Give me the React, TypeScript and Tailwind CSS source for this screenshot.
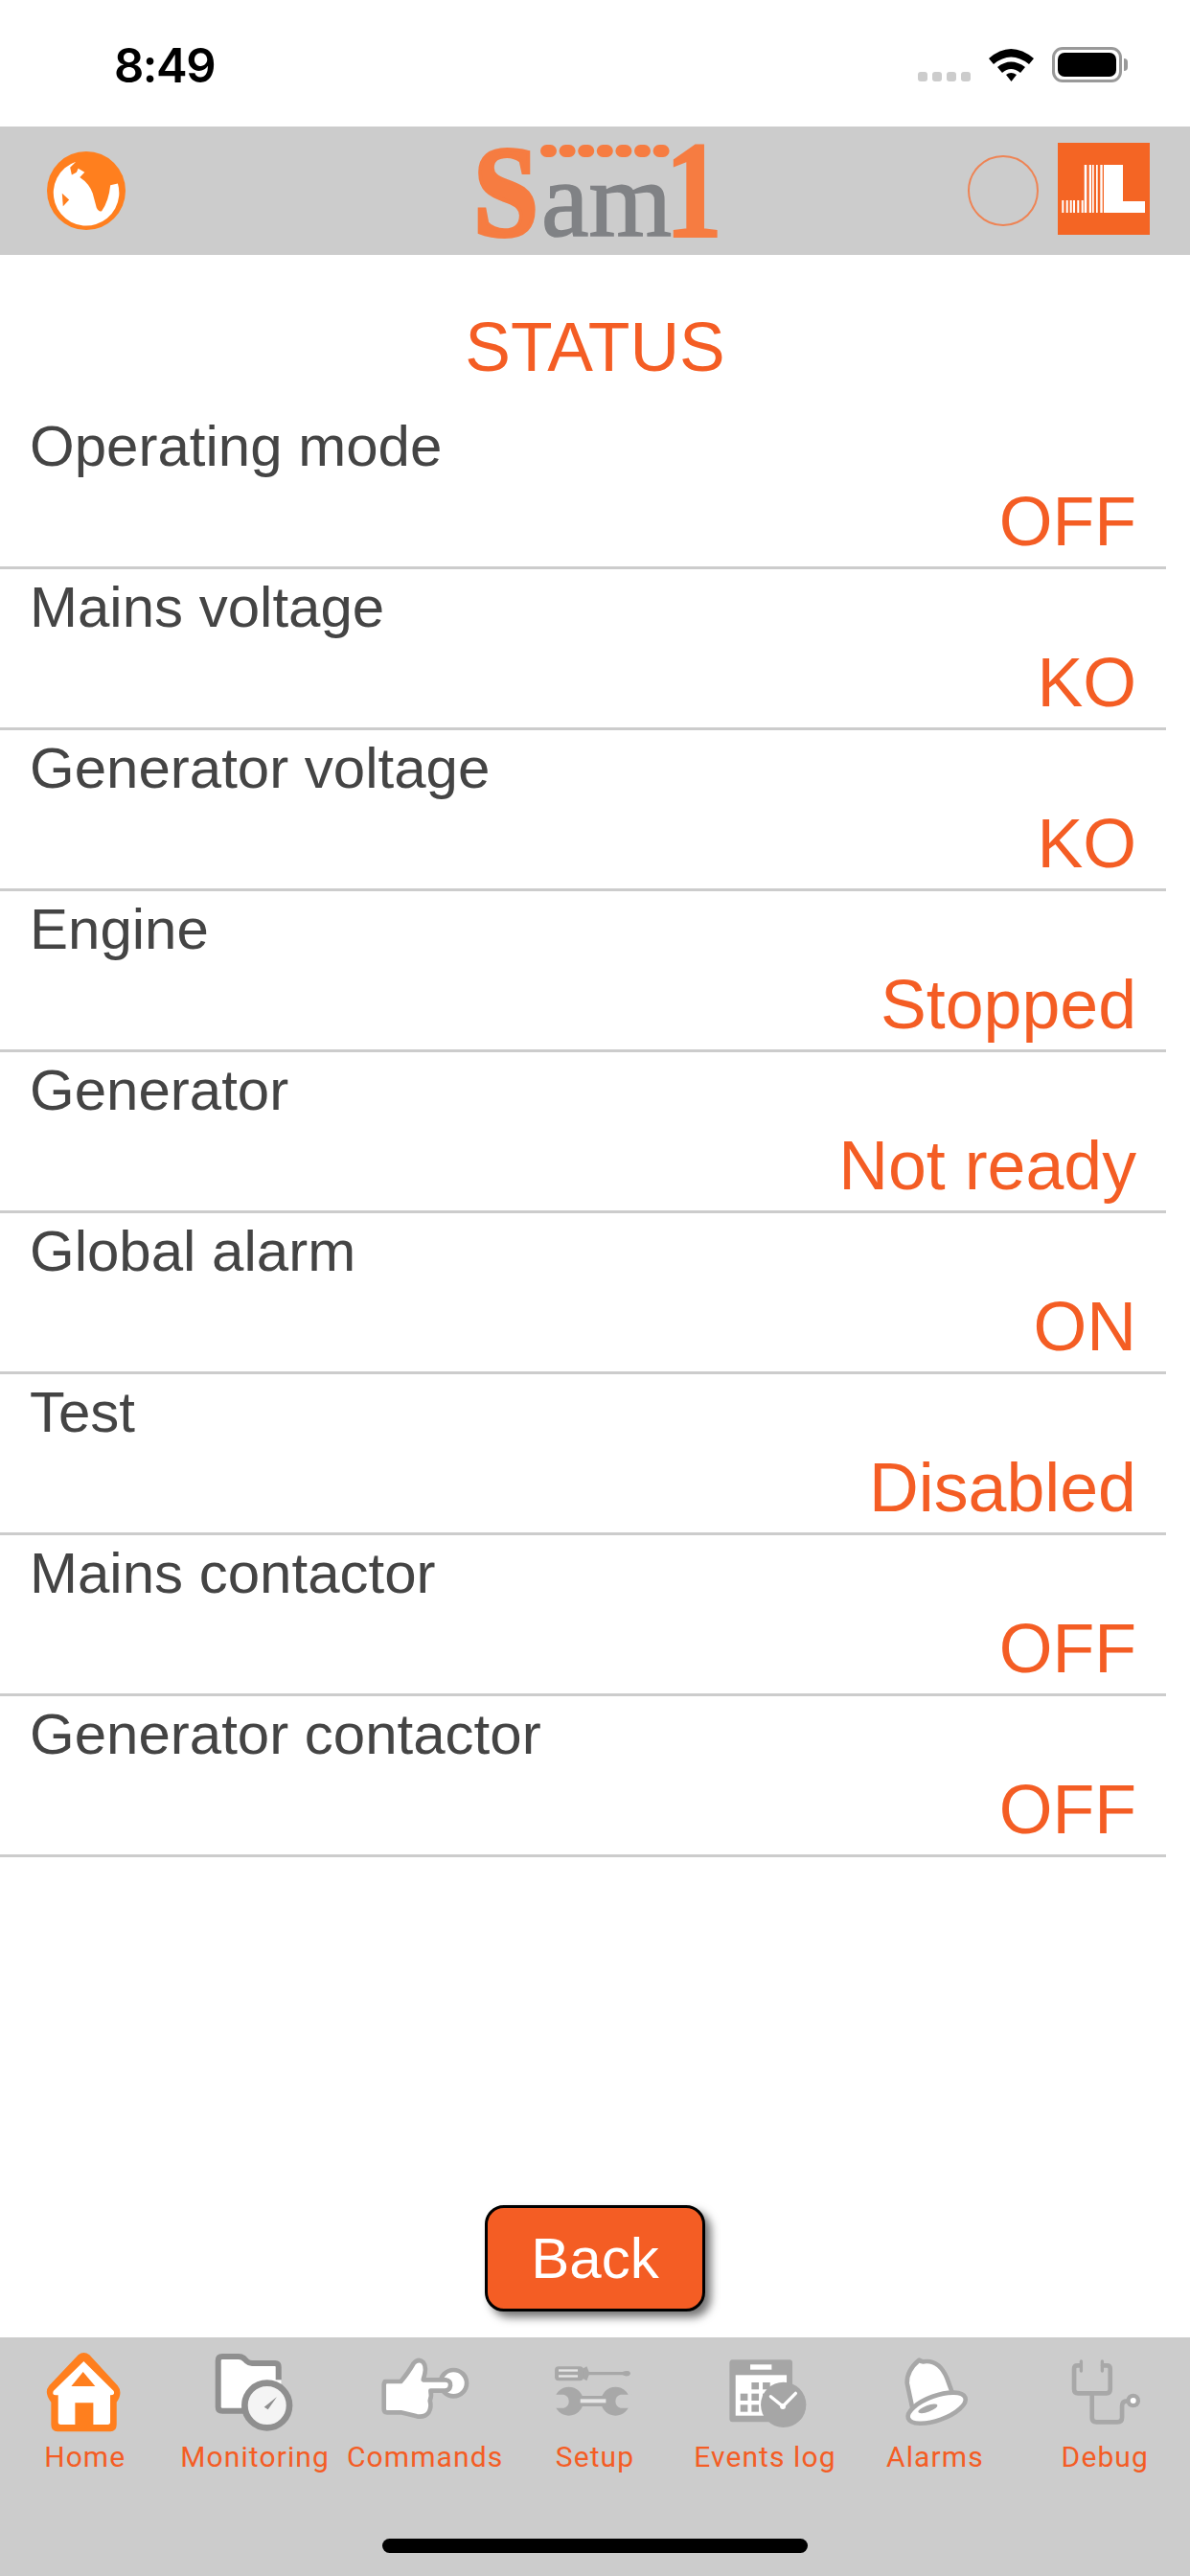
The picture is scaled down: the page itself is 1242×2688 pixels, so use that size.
const rows = [
  ["Operating mode", "OFF"],
  ["Mains voltage", "KO"],
  ["Generator voltage", "KO"],
  ["Engine", "Stopped"],
  ["Generator", "Not ready"],
  ["Global alarm", "ON"],
  ["Test", "Disabled"],
  ["Mains contactor", "OFF"],
  ["Generator contactor", "OFF"],
]

const GRAY = "#a8a8a8"
const ORANGE = "#ff7f1e"

function Icon({ box, children }: { box: string; children: React.ReactNode }) {
  return (
    <svg viewBox={box} className="w-full h-[86px]" aria-hidden="true">
      {children}
    </svg>
  )
}

function HomeIcon() {
  return (
    <Icon box="-120 9 532 258">
      <path
        d="M125 22Q142 8 160 22L248 118Q266 140 245 170V240Q245 262 225 262H60Q40 262 40 240V170Q16 140 34 118Z"
        fill={ORANGE}
      />
      <path
        d="M142 42L236 135Q241 148 226 148H225V232Q225 240 217 240H172V172H115V240H70Q62 240 62 232V148H55Q42 148 47 135Z"
        fill="#fff"
      />
      <path d="M140 75L178 120H103Z" fill={ORANGE} />
    </Icon>
  )
}

function MonitoringIcon() {
  return (
    <Icon box="412 9 532 258">
      <path
        d="M564 40Q564 27 577 27H628Q640 27 648 36L654 42Q660 48 670 48H742Q753 48 753 60V150H690L640 197H577Q564 197 564 185Z"
        fill="#fff"
        stroke="#8f8f8f"
        strokeWidth="18"
      />
      <path d="M700 100H762V150H700Z" fill="#fff" />
      <path d="M745 48Q754 50 754 60V85L745 80Z" fill="#8f8f8f" />
      <circle cx="717" cy="180" r="70" fill="#f4f4f4" stroke="#8f8f8f" strokeWidth="20" />
      <path d="M748 153L720 193L708 185Z" fill="#8f8f8f" />
    </Icon>
  )
}

function CommandsIcon() {
  return (
    <Icon box="-105 9 532 258">
      <circle cx="250" cy="110" r="41" fill="#fff" stroke={GRAY} strokeWidth="14" />
      <path
        d="M35 105H85Q110 75 125 48Q140 32 155 45Q168 60 155 100H225Q242 102 240 118Q238 134 222 134H178Q182 150 176 165Q182 185 172 202Q160 218 135 214L85 202H42Q32 202 32 192V115Q32 105 42 105Z"
        fill="#fff"
        stroke={GRAY}
        strokeWidth="14"
        strokeLinejoin="round"
      />
    </Icon>
  )
}

function SetupIcon() {
  return (
    <Icon box="427 9 532 258">
      <rect x="568" y="58" width="90" height="45" rx="12" fill={GRAY} />
      <rect x="580" y="67" width="60" height="7" fill="#e6e6e6" />
      <rect x="580" y="85" width="60" height="7" fill="#e6e6e6" />
      <path d="M655 65L668 58L675 75H780Q790 70 800 73Q810 80 800 87Q790 90 780 85H675L668 103L655 95Z" fill={GRAY} />
      <circle cx="612" cy="167" r="45" fill={GRAY} />
      <circle cx="758" cy="167" r="45" fill={GRAY} />
      <rect x="620" y="150" width="130" height="33" fill={GRAY} />
      <rect x="648" y="160" width="80" height="12" fill="#e6e6e6" />
      <path d="M560 146H596Q612 150 612 167Q612 184 596 188H560Z" fill="#ccc" />
      <path d="M810 146H774Q758 150 758 167Q758 184 774 188H810Z" fill="#ccc" />
    </Icon>
  )
}

function EventsIcon() {
  const cells = [
    [87, 108], [122, 108],
    [52, 143], [87, 143], [122, 143],
    [52, 178], [87, 178], [122, 178],
  ]
  return (
    <Icon box="-136 9 532 258">
      <rect x="18" y="37" width="197" height="195" rx="10" fill="#a6a6a6" />
      <rect x="83" y="52" width="67" height="16" fill="#fff" />
      <rect x="37" y="85" width="160" height="127" fill="#fff" />
      {cells.map(([x, y]) => (
        <rect key={`${x}-${y}`} x={x} y={y} width="23" height="22" fill="#a6a6a6" />
      ))}
      <circle cx="187" cy="178" r="71" fill="#a6a6a6" />
      <path d="M147 152L185 183L225 142" fill="none" stroke="#fff" strokeWidth="10" strokeLinecap="round" />
      <circle cx="185" cy="183" r="9" fill="#fff" />
    </Icon>
  )
}

function AlarmsIcon() {
  return (
    <Icon box="396 9 532 258">
      <path
        d="M613 38Q574 70 575 110L592 190L720 150L700 95Q675 35 625 43Q618 42 613 38Z"
        fill="#fff"
        stroke={GRAY}
        strokeWidth="14"
        strokeLinejoin="round"
      />
      <ellipse cx="668" cy="188" rx="95" ry="38" transform="rotate(-20 668 188)" fill="#fff" stroke={GRAY} strokeWidth="14" />
      <ellipse cx="640" cy="190" rx="32" ry="10" transform="rotate(-20 640 190)" fill={GRAY} />
    </Icon>
  )
}

function DebugIcon() {
  return (
    <Icon box="-106 9 532 258">
      <g fill="none" stroke={GRAY} strokeLinecap="round">
        <path d="M82 55H72Q62 55 62 65V130Q62 142 74 142H163Q175 142 175 130V65Q175 55 165 55H152" strokeWidth="14" />
        <path d="M84 42V72M150 42V72" strokeWidth="10" />
        <path d="M118 142V218Q118 232 132 232H198Q212 232 212 218V182Q212 166 228 166H240" strokeWidth="14" />
      </g>
      <circle cx="247" cy="165" r="22" fill={GRAY} />
      <circle cx="247" cy="165" r="9" fill="#fff" />
    </Icon>
  )
}

const tabs = [
  { label: "Home", icon: <HomeIcon /> },
  { label: "Monitoring", icon: <MonitoringIcon /> },
  { label: "Commands", icon: <CommandsIcon /> },
  { label: "Setup", icon: <SetupIcon /> },
  { label: "Events log", icon: <EventsIcon /> },
  { label: "Alarms", icon: <AlarmsIcon /> },
  { label: "Debug", icon: <DebugIcon /> },
]

// the logo is wider in the stems than the serif font, so the text gets a stroke
function Logo() {
  return (
    <svg viewBox="0 -19 255 134" className="w-[255px] h-[134px] overflow-visible" aria-hidden="true">
      <text x="1" y="95" fontSize="136" fontWeight="700" textLength="68" lengthAdjust="spacingAndGlyphs" fill="#f67c41" stroke="#f67c41" strokeWidth="4" className="font-['Liberation_Serif']">
        S
      </text>
      {[0, 1, 2, 3, 4, 5, 6].map((i) => (
        <rect key={i} x={71 + i * 19.6} y="0" width="17" height="13" rx="6.5" fill="#f67c41" />
      ))}
      <text x="72" y="95" fontSize="112" textLength="136" lengthAdjust="spacingAndGlyphs" fill="#808285" stroke="#808285" strokeWidth="1.6" className="font-['Liberation_Serif']">
        am
      </text>
      <text x="201" y="96" fontSize="143" fontWeight="700" textLength="60" lengthAdjust="spacingAndGlyphs" fill="#f67c41" stroke="#f67c41" strokeWidth="2" className="font-['Liberation_Serif']">
        1
      </text>
    </svg>
  )
}

function Globe() {
  return (
    <svg viewBox="28 25 244 244" className="w-[82px] h-[82px]" aria-hidden="true">
      <circle cx="150" cy="147" r="122" fill={ORANGE} />
      <path
        d="M118 57L100 75L105 98L120 90L125 78L145 90L130 105Q160 125 170 155L182 200Q190 215 198 210Q220 180 225 130L248 125A102 102 0 1 1 118 57Z"
        fill="#fff"
      />
      <path d="M75 155L97 175L78 195Z" fill={ORANGE} />
    </svg>
  )
}

function BrandMark() {
  const shortBars = [4.3, 8.7, 12.7, 16, 20.3, 24.7]
  const tallBars = [
    [27.7, 2.6],
    [32.7, 2.3],
    [36, 1.7],
    [40, 1.7],
    [44.3, 2.4],
  ]
  return (
    <svg viewBox="0 0 96 96" className="w-24 h-24" aria-hidden="true">
      <rect width="96" height="96" fill="#f46524" />
      {shortBars.map((x) => (
        <rect key={x} x={x} y="60" width="2" height="13" fill="#fff" />
      ))}
      {tallBars.map(([x, w]) => (
        <rect key={x} x={x} y="23" width={w} height="50" fill="#fff" />
      ))}
      <path d="M48 23H68V61H91V73H48Z" fill="#fff" />
    </svg>
  )
}

export default function App() {
  return (
    <div className="w-[1242px] h-[2688px] flex flex-col bg-white font-['Liberation_Sans',sans-serif]">
      {/* status bar */}
      <div className="h-[132px] shrink-0 flex items-start">
        <span className="ml-[119px] mt-[40px] text-[49px] leading-[58px] font-semibold tracking-[-1.5px] text-black font-['Inter',sans-serif]">
          8:49
        </span>
        <div className="ml-auto mr-[65px] mt-[49px] flex items-start">
          <div className="mt-[26px] flex gap-[5px]">
            {[0, 1, 2, 3].map((i) => (
              <div key={i} className="w-[10px] h-[10px] rounded-[3px] bg-[#cccccc]" />
            ))}
          </div>
          <svg viewBox="0 0 47 36" className="ml-[19px] w-[47px] h-[36px]" aria-hidden="true">
            <path d="M0 12Q23 -8 47 12L42 18Q23 3 5 18Z" fill="#000" />
            <path d="M9 21Q23 10 38 21L33 27Q23 19 14 27Z" fill="#000" />
            <path d="M18 29Q23 25 29 29L23.5 36Z" fill="#000" />
          </svg>
          <div className="ml-[19px] w-[73px] h-[37px] rounded-[11px] border-[3px] border-[#999999] p-[3px]">
            <div className="w-full h-full rounded-[7px] bg-black" />
          </div>
          <div className="ml-[2px] mt-[12px] w-[4px] h-[13px] rounded-r-[4px] bg-[#999999]" />
        </div>
      </div>

      {/* header */}
      <div className="h-[134px] shrink-0 bg-[#cccccc] flex items-center">
        <div className="ml-[49px]">
          <Globe />
        </div>
        <div className="ml-[362px]">
          <Logo />
        </div>
        <div className="ml-[262px] w-[74px] h-[74px] rounded-full border-2 border-[#ee8455]" />
        <div className="ml-[20px] -mt-[4px]">
          <BrandMark />
        </div>
      </div>

      {/* status list */}
      <main className="flex-1 flex flex-col">
        <h1 className="h-[160px] pt-[60px] text-center text-[71.5px] leading-[72px] font-normal text-[#f45d24]">STATUS</h1>
        {rows.map(([label, value]) => (
          <div key={label} className="w-[1217px] h-[168px] pt-[10px] border-b-[3px] border-[#cccccc]">
            <div className="pl-[31px] text-[60px] leading-[60px] text-[#444444]">{label}</div>
            <div className="mt-[12px] pr-[31px] text-right text-[71.7px] leading-[72px] text-[#f45d24]">{value}</div>
          </div>
        ))}
        <div className="mt-auto mb-[27px] flex justify-center">
          <button className="w-[230px] h-[111px] rounded-[20px] border-[3px] border-black bg-[#f45d24] text-white text-[60px] shadow-[6px_6px_10px_rgba(0,0,0,0.55)]">
            Back
          </button>
        </div>
      </main>

      {/* tab bar */}
      <nav className="h-[249px] shrink-0 bg-[#cccccc] flex flex-col">
        <div className="grid grid-cols-7 pt-[14px]">
          {tabs.map((tab) => (
            <div key={tab.label} className="flex flex-col items-center">
              {tab.icon}
              <span className="mt-[8px] text-[30px] leading-[34px] tracking-[1.1px] text-[#f45d24] font-['Roboto',sans-serif] whitespace-nowrap">
                {tab.label}
              </span>
            </div>
          ))}
        </div>
        <div className="mt-auto mb-[24px] mx-auto w-[444px] h-[15px] rounded-full bg-black" />
      </nav>
    </div>
  )
}
